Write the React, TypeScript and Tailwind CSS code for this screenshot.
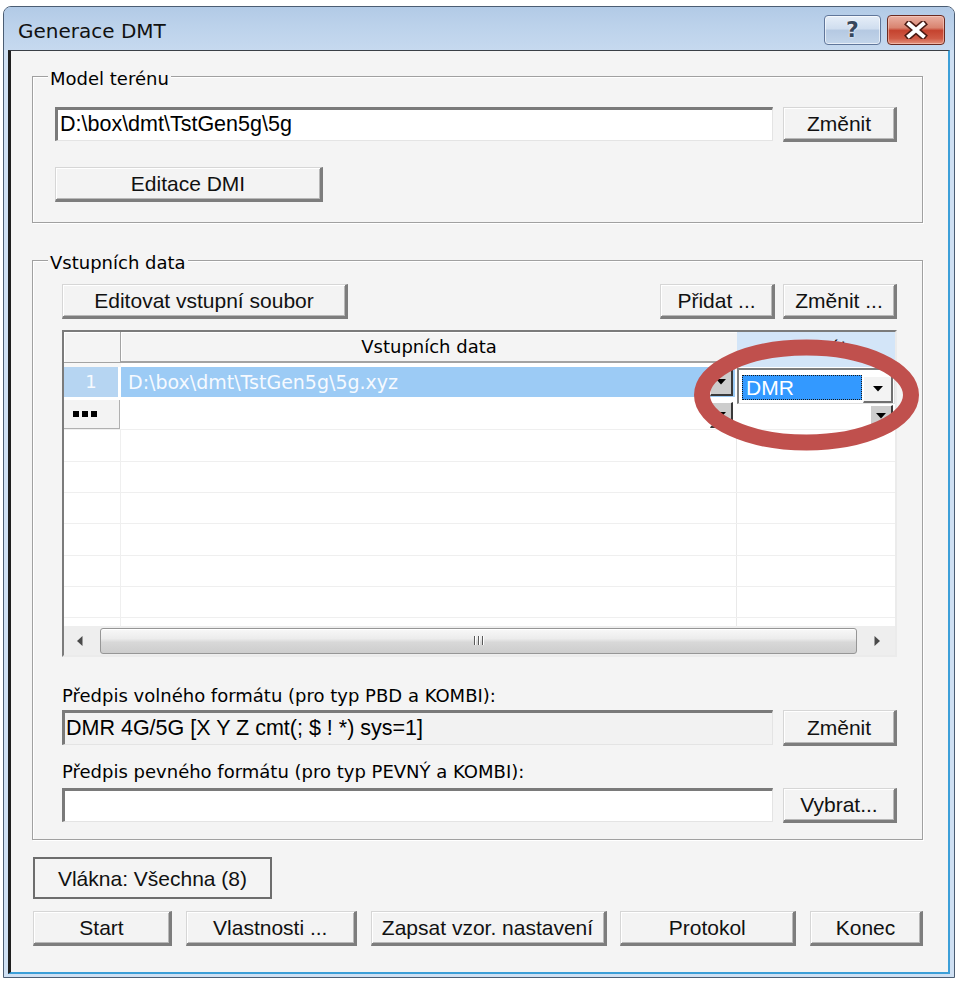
import React from "react";

const LS = "font-['Liberation_Sans',Arial,sans-serif]";
const DV = "font-['DejaVu_Sans',Verdana,sans-serif]";

function Btn({ className, children }: { className: string; children?: React.ReactNode }) {
  return (
    <div
      className={`${className} shrink-0 flex items-center justify-center bg-[#f3f3f3] border-t border-l border-t-[#d6d6d6] border-l-[#d6d6d6] border-r-[3px] border-b-[3px] border-r-[#7d7d7d] border-b-[#7d7d7d] shadow-[inset_1px_1px_0_#ffffff,inset_-1px_-1px_0_#b8b8b8] text-[21px] leading-none text-[#111] whitespace-nowrap ${LS}`}
    >
      {children}
    </div>
  );
}

function Sunken({ className, children }: { className: string; children?: React.ReactNode }) {
  return (
    <div
      className={`${className} shrink-0 flex items-center border-t-[3px] border-l-[3px] border-t-[#7a7a7a] border-l-[#7a7a7a] border-r border-b border-r-[#e4e4e4] border-b-[#e4e4e4] text-[21.5px] leading-none text-black whitespace-nowrap overflow-hidden ${LS}`}
    >
      {children}
    </div>
  );
}

function Tri() {
  return (
    <svg width="10" height="6" viewBox="0 0 10 6">
      <path d="M0 0H10L5 5.5Z" fill="#000" />
    </svg>
  );
}

function GridDrop({ className }: { className: string }) {
  return (
    <div
      className={`${className} shrink-0 bg-[#cdcdcd] border-t border-l border-t-white border-l-white border-r-2 border-b-2 border-r-[#3a3a3a] border-b-[#3a3a3a] flex items-center justify-center`}
    >
      <Tri />
    </div>
  );
}

function GroupLabel({ children }: { children: React.ReactNode }) {
  return (
    <span
      className={`absolute left-[15px] -top-[9px] px-[2px] bg-[#f4f4f4] text-[18px] leading-[22px] text-black whitespace-nowrap ${DV}`}
    >
      {children}
    </span>
  );
}

function EmptyRow({ h }: { h: string }) {
  return (
    <div className={`${h} shrink-0 flex border-b border-b-[#efefef]`}>
      <div className="w-[57px] border-r border-r-[#efefef]" />
      <div className="w-[616px] border-r border-r-[#e9e9e9]" />
      <div className="w-[158px]" />
    </div>
  );
}

export default function App() {
  return (
    <div className="relative w-[960px] h-[984px] bg-white overflow-hidden">
      <div className="ml-[3px] mt-[6px] w-[952px] h-[972px] flex flex-col rounded-t-[8px] border border-[#4b5d73] bg-[#cfe0f3]">
        {/* Title bar */}
        <div className="h-[43px] shrink-0 flex items-start rounded-t-[7px] bg-[linear-gradient(180deg,#b2cae6_0%,#bcd2eb_45%,#c6d9ef_100%)]">
          <div className={`flex-1 pl-[14px] pt-[12px] text-[20px] leading-[24px] text-[#111] ${DV}`}>
            Generace DMT
          </div>
          <div className="mt-[8px] mr-[9px] flex gap-[6px]">
            <div className="w-[57px] h-[30px] rounded-[4px] border border-[#60769a] bg-[linear-gradient(180deg,#e6eef8_0%,#d0deef_45%,#b5c9e2_52%,#c3d5ea_100%)] shadow-[inset_0_0_0_1px_rgba(255,255,255,0.6)] flex items-center justify-center">
              <span className={`text-[22px] leading-none font-bold text-[#37475c] [text-shadow:0_0_2px_#ffffff,0_0_1px_#ffffff] ${DV}`}>
                ?
              </span>
            </div>
            <div className="w-[58px] h-[30px] rounded-[4px] border border-[#6b2a20] bg-[linear-gradient(180deg,#eab0a2_0%,#d98470_42%,#c5432f_52%,#cf5a45_80%,#e5927c_100%)] shadow-[inset_0_0_0_1px_rgba(255,220,210,0.5)] flex items-center justify-center">
              <svg width="24" height="18" viewBox="0 0 24 18">
                <path d="M5 3L19 15M19 3L5 15" stroke="#4a1a12" strokeWidth="7" strokeLinecap="square" />
                <path d="M5 3L19 15M19 3L5 15" stroke="#ffffff" strokeWidth="4" strokeLinecap="square" />
              </svg>
            </div>
          </div>
        </div>

        {/* Client area */}
        <div className="flex-1 ml-[4px] mr-[4px] mb-[3px] border-l-[3px] border-t border-r-2 border-b-2 border-l-[#1f1f1f] border-t-[#3a3f46] border-r-[#3c9fd8] border-b-[#3c9fd8] bg-[#f4f4f4] flex flex-col">
          {/* Group 1: Model terénu */}
          <div className="relative mt-[25px] ml-[21px] w-[891px] h-[147px] shrink-0 border border-[#a0a0a0] shadow-[inset_1px_1px_0_#ffffff,1px_1px_0_#ffffff]">
            <GroupLabel>Model terénu</GroupLabel>
            <div className="pt-[30px] pl-[22px] flex flex-col">
              <div className="flex gap-[10px] items-start">
                <Sunken className="w-[718px] h-[34px] bg-white pl-[2px]">D:\box\dmt\TstGen5g\5g</Sunken>
                <Btn className="w-[114px] h-[35px]">Změnit</Btn>
              </div>
              <Btn className="mt-[25px] w-[268px] h-[35px]">Editace DMI</Btn>
            </div>
          </div>

          {/* Group 2: Vstupních data */}
          <div className="relative mt-[37px] ml-[21px] w-[891px] h-[580px] shrink-0 border border-[#a0a0a0] shadow-[inset_1px_1px_0_#ffffff,1px_1px_0_#ffffff]">
            <GroupLabel>Vstupních data</GroupLabel>
            <div className="pt-[23px] pl-[29px] w-[864px] flex flex-col">
              <div className="flex justify-between items-start">
                <Btn className="w-[286px] h-[35px]">Editovat vstupní soubor</Btn>
                <div className="flex gap-[8px]">
                  <Btn className="w-[115px] h-[35px]">Přidat ...</Btn>
                  <Btn className="w-[114px] h-[35px]">Změnit ...</Btn>
                </div>
              </div>

              {/* Grid */}
              <div className="mt-[11px] w-[835px] h-[327px] shrink-0 border-2 border-t-[#7b7b7b] border-l-[#7b7b7b] border-r-[#ebebeb] border-b-[#ebebeb] bg-white flex flex-col">
                {/* header */}
                <div className="h-[35px] shrink-0 flex">
                  <div className="w-[57px] flex flex-col">
                    <div className="h-[31px] bg-[#f4f4f4] border-r border-b border-r-[#a3a3a3] border-b-[#a3a3a3] shadow-[inset_1px_1px_0_#ffffff]" />
                    <div className="flex-1 bg-[#f7f7f7]" />
                  </div>
                  <div className="w-[616px] flex flex-col">
                    <div className={`h-[31px] bg-[#f4f4f4] border-b-2 border-b-[#a3a3a3] shadow-[inset_1px_1px_0_#ffffff] flex items-center justify-center text-[18px] leading-none text-black ${DV}`}>
                      Vstupních data
                    </div>
                    <div className="flex-1 bg-white" />
                  </div>
                  <div className="w-[158px] bg-[#d3e5f8]">
                    <div className={`h-[31px] flex items-center justify-center text-[18px] leading-none text-black ${DV}`}>
                      Formát
                    </div>
                  </div>
                </div>

                {/* row 1 */}
                <div className="h-[31px] shrink-0 flex">
                  <div className={`w-[57px] border-r-[3px] border-r-white border-b border-b-white bg-[#b6d5f2] flex items-center justify-center text-[18px] leading-none text-[#f6faff] ${DV}`}>
                    1
                  </div>
                  <div className={`w-[616px] border-r-2 border-r-white border-b border-b-white bg-[#9ccbf5] flex items-center pl-[7px] pr-[2px] text-[19px] leading-none text-[#f6faff] whitespace-nowrap ${DV}`}>
                    <span className="flex-1">D:\box\dmt\TstGen5g\5g.xyz</span>
                    <GridDrop className="w-[23px] h-[28px]" />
                  </div>
                  <div className="relative w-[158px] bg-white">
                    <div className="absolute left-0 top-[1px] w-[158px] h-[36px] bg-white border-t-2 border-l-2 border-t-[#7d7d7d] border-l-[#7d7d7d] border-r border-b border-r-[#e0e0e0] border-b-[#e0e0e0] flex items-start pl-[3px] pt-[5px]">
                      <div className={`w-[120px] h-[25px] bg-[#3399ff] border border-dotted border-[#1a1a1a] flex items-center pl-[3px] text-[21px] leading-none text-white ${LS}`}>
                        DMR
                      </div>
                      <div className="ml-[1px] mt-[1px] w-[30px] h-[27px] bg-[#f3f3f3] border-t border-l border-t-white border-l-white border-r-2 border-b-2 border-r-[#707070] border-b-[#707070] flex items-center justify-center">
                        <Tri />
                      </div>
                    </div>
                  </div>
                </div>

                {/* row 2 */}
                <div className="h-[32px] shrink-0 flex border-b border-b-[#efefef]">
                  <div className="w-[57px] pt-[2px] bg-white">
                    <div className="h-[29px] w-[56px] bg-[#f3f3f3] border-r border-b border-r-[#b0b0b0] border-b-[#b0b0b0] flex items-center gap-[3px] pl-[9px]">
                      <span className="w-[6px] h-[6px] bg-black" />
                      <span className="w-[6px] h-[6px] bg-black" />
                      <span className="w-[6px] h-[6px] bg-black" />
                    </div>
                  </div>
                  <div className="w-[616px] border-r-2 border-r-white flex justify-end items-start pt-[4px] pr-[2px] bg-white">
                    <GridDrop className="w-[23px] h-[26px]" />
                  </div>
                  <div className="w-[158px] flex justify-end items-start pt-[7px] pr-[2px] bg-white">
                    <GridDrop className="w-[23px] h-[23px]" />
                  </div>
                </div>

                <EmptyRow h="h-[32px]" />
                <EmptyRow h="h-[31px]" />
                <EmptyRow h="h-[31px]" />
                <EmptyRow h="h-[32px]" />
                <EmptyRow h="h-[31px]" />
                <EmptyRow h="h-[31px]" />
                <div className="flex-1 flex">
                  <div className="w-[57px] border-r border-r-[#efefef]" />
                  <div className="w-[616px] border-r border-r-[#e9e9e9]" />
                  <div className="w-[158px]" />
                </div>

                {/* horizontal scrollbar */}
                <div className="h-[29px] shrink-0 flex items-center bg-[#eeeeee]">
                  <div className="w-[36px] flex items-center justify-center pr-[4px]">
                    <svg width="6" height="10" viewBox="0 0 6 10">
                      <path d="M5.5 0V10L0 5Z" fill="#4a4a4a" />
                    </svg>
                  </div>
                  <div className="w-[757px] h-[26px] rounded-[3px] border border-[#969696] bg-[linear-gradient(180deg,#f8f8f8_0%,#ececec_40%,#d8d8d8_55%,#cdcdcd_100%)] shadow-[inset_0_1px_0_#ffffff] flex items-center justify-center gap-[3px]">
                    <span className="w-[1px] h-[9px] bg-[#5a5a5a] shadow-[1px_0_0_#ffffff]" />
                    <span className="w-[1px] h-[9px] bg-[#5a5a5a] shadow-[1px_0_0_#ffffff]" />
                    <span className="w-[1px] h-[9px] bg-[#5a5a5a] shadow-[1px_0_0_#ffffff]" />
                  </div>
                  <div className="flex-1 flex items-center justify-center pl-[2px]">
                    <svg width="6" height="10" viewBox="0 0 6 10">
                      <path d="M0.5 0V10L6 5Z" fill="#4a4a4a" />
                    </svg>
                  </div>
                </div>
              </div>

              {/* Free format */}
              <div className={`mt-[28px] text-[18px] leading-[22px] text-black whitespace-nowrap ${DV}`}>
                Předpis volného formátu (pro typ PBD a KOMBI):
              </div>
              <div className="mt-[3px] flex gap-[10px] items-start">
                <Sunken className="w-[711px] h-[35px] bg-[#f2f2f2] pl-[1px]">DMR 4G/5G [X Y Z cmt(; $ ! *) sys=1]</Sunken>
                <Btn className="w-[114px] h-[36px]">Změnit</Btn>
              </div>

              {/* Fixed format */}
              <div className={`mt-[15px] text-[18px] leading-[22px] text-black whitespace-nowrap ${DV}`}>
                Předpis pevného formátu (pro typ PEVNÝ a KOMBI):
              </div>
              <div className="mt-[5px] flex gap-[10px] items-start">
                <Sunken className="w-[711px] h-[34px] bg-white" />
                <Btn className="w-[114px] h-[35px]">Vybrat...</Btn>
              </div>
            </div>
          </div>

          {/* Threads */}
          <div className={`mt-[17px] ml-[22px] w-[239px] h-[42px] shrink-0 border-2 border-[#6d6d6d] bg-[#f4f4f4] flex items-center justify-center text-[21px] leading-none text-[#111] whitespace-nowrap ${LS}`}>
            Vlákna: Všechna (8)
          </div>

          {/* Bottom buttons */}
          <div className="mt-[12px] ml-[22px] w-[890px] flex justify-between">
            <Btn className="w-[139px] h-[35px]">Start</Btn>
            <Btn className="w-[171px] h-[35px]">Vlastnosti ...</Btn>
            <Btn className="w-[236px] h-[35px]">Zapsat vzor. nastavení</Btn>
            <Btn className="w-[176px] h-[35px]">Protokol</Btn>
            <Btn className="w-[113px] h-[35px]">Konec</Btn>
          </div>
        </div>
      </div>

      {/* Red annotation ellipse */}
      <svg className="absolute left-0 top-0 pointer-events-none" width="960" height="984" viewBox="0 0 960 984">
        <ellipse cx="806.5" cy="395" rx="104.5" ry="47.5" fill="none" stroke="#c0504d" strokeWidth="16" />
      </svg>
    </div>
  );
}
